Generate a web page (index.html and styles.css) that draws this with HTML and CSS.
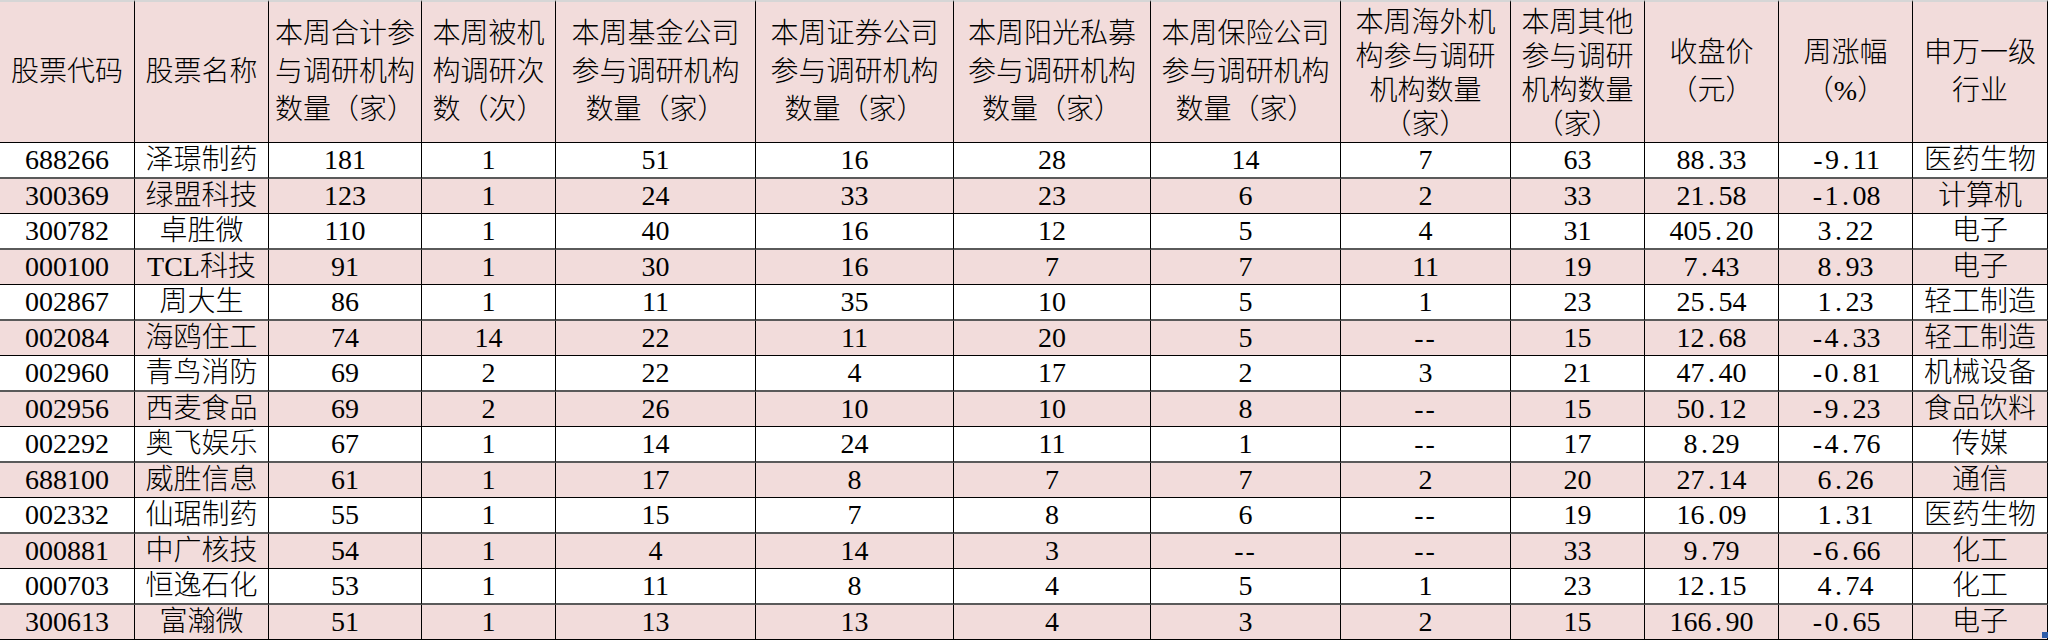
FILE: index.html
```html
<!DOCTYPE html>
<html lang="zh-CN">
<head>
<meta charset="utf-8">
<title>本周机构调研统计</title>
<link rel="stylesheet" href="styles.css">
</head>
<body>
<div class="sheet">
<table class="grid">
  <colgroup>
    <col class="c135"><col class="c134"><col class="c153"><col class="c134"><col class="c200"><col class="c198"><col class="c197"><col class="c190"><col class="c170"><col class="c134"><col class="c134"><col class="c134"><col class="c135">
  </colgroup>
  <thead>
    <tr>
      <th>股票代码</th>
      <th>股票名称</th>
      <th>本周合计参<br>与调研机构<br>数量（家）</th>
      <th>本周被机<br>构调研次<br>数（次）</th>
      <th>本周基金公司<br>参与调研机构<br>数量（家）</th>
      <th>本周证券公司<br>参与调研机构<br>数量（家）</th>
      <th>本周阳光私募<br>参与调研机构<br>数量（家）</th>
      <th>本周保险公司<br>参与调研机构<br>数量（家）</th>
      <th class="l4">本周海外机<br>构参与调研<br>机构数量<br>（家）</th>
      <th class="l4">本周其他<br>参与调研<br>机构数量<br>（家）</th>
      <th>收盘价<br>（元）</th>
      <th>周涨幅<br>（%）</th>
      <th>申万一级<br>行业</th>
    </tr>
  </thead>
  <tbody>
    <tr class="w"><td>688266</td><td>泽璟制药</td><td>181</td><td>1</td><td>51</td><td>16</td><td>28</td><td>14</td><td>7</td><td>63</td><td>88<span class="hw">.</span>33</td><td><span class="hw">-</span>9<span class="hw">.</span>11</td><td>医药生物</td></tr>
    <tr class="p"><td>300369</td><td>绿盟科技</td><td>123</td><td>1</td><td>24</td><td>33</td><td>23</td><td>6</td><td>2</td><td>33</td><td>21<span class="hw">.</span>58</td><td><span class="hw">-</span>1<span class="hw">.</span>08</td><td>计算机</td></tr>
    <tr class="w"><td>300782</td><td>卓胜微</td><td>110</td><td>1</td><td>40</td><td>16</td><td>12</td><td>5</td><td>4</td><td>31</td><td>405<span class="hw">.</span>20</td><td>3<span class="hw">.</span>22</td><td>电子</td></tr>
    <tr class="p"><td>000100</td><td>TCL科技</td><td>91</td><td>1</td><td>30</td><td>16</td><td>7</td><td>7</td><td>11</td><td>19</td><td>7<span class="hw">.</span>43</td><td>8<span class="hw">.</span>93</td><td>电子</td></tr>
    <tr class="w"><td>002867</td><td>周大生</td><td>86</td><td>1</td><td>11</td><td>35</td><td>10</td><td>5</td><td>1</td><td>23</td><td>25<span class="hw">.</span>54</td><td>1<span class="hw">.</span>23</td><td>轻工制造</td></tr>
    <tr class="p"><td>002084</td><td>海鸥住工</td><td>74</td><td>14</td><td>22</td><td>11</td><td>20</td><td>5</td><td class="na">--</td><td>15</td><td>12<span class="hw">.</span>68</td><td><span class="hw">-</span>4<span class="hw">.</span>33</td><td>轻工制造</td></tr>
    <tr class="w"><td>002960</td><td>青鸟消防</td><td>69</td><td>2</td><td>22</td><td>4</td><td>17</td><td>2</td><td>3</td><td>21</td><td>47<span class="hw">.</span>40</td><td><span class="hw">-</span>0<span class="hw">.</span>81</td><td>机械设备</td></tr>
    <tr class="p"><td>002956</td><td>西麦食品</td><td>69</td><td>2</td><td>26</td><td>10</td><td>10</td><td>8</td><td class="na">--</td><td>15</td><td>50<span class="hw">.</span>12</td><td><span class="hw">-</span>9<span class="hw">.</span>23</td><td>食品饮料</td></tr>
    <tr class="w"><td>002292</td><td>奥飞娱乐</td><td>67</td><td>1</td><td>14</td><td>24</td><td>11</td><td>1</td><td class="na">--</td><td>17</td><td>8<span class="hw">.</span>29</td><td><span class="hw">-</span>4<span class="hw">.</span>76</td><td>传媒</td></tr>
    <tr class="p"><td>688100</td><td>威胜信息</td><td>61</td><td>1</td><td>17</td><td>8</td><td>7</td><td>7</td><td>2</td><td>20</td><td>27<span class="hw">.</span>14</td><td>6<span class="hw">.</span>26</td><td>通信</td></tr>
    <tr class="w"><td>002332</td><td>仙琚制药</td><td>55</td><td>1</td><td>15</td><td>7</td><td>8</td><td>6</td><td class="na">--</td><td>19</td><td>16<span class="hw">.</span>09</td><td>1<span class="hw">.</span>31</td><td>医药生物</td></tr>
    <tr class="p"><td>000881</td><td>中广核技</td><td>54</td><td>1</td><td>4</td><td>14</td><td>3</td><td class="na">--</td><td class="na">--</td><td>33</td><td>9<span class="hw">.</span>79</td><td><span class="hw">-</span>6<span class="hw">.</span>66</td><td>化工</td></tr>
    <tr class="w"><td>000703</td><td>恒逸石化</td><td>53</td><td>1</td><td>11</td><td>8</td><td>4</td><td>5</td><td>1</td><td>23</td><td>12<span class="hw">.</span>15</td><td>4<span class="hw">.</span>74</td><td>化工</td></tr>
    <tr class="p"><td>300613</td><td>富瀚微</td><td>51</td><td>1</td><td>13</td><td>13</td><td>4</td><td>3</td><td>2</td><td>15</td><td>166<span class="hw">.</span>90</td><td><span class="hw">-</span>0<span class="hw">.</span>65</td><td>电子</td></tr>
  </tbody>
</table>
<span class="handle"></span>
</div>
</body>
</html>
```

FILE: styles.css
```css
html, body {
  margin: 0;
  padding: 0;
  background: #ffffff;
}

.sheet {
  position: relative;
  width: 2048px;
  height: 640px;
  overflow: hidden;
}

.grid {
  border-collapse: separate;
  border-spacing: 0;
  table-layout: fixed;
  width: 2048px;
  font-family: "Liberation Serif", "Noto Sans CJK SC", serif;
  font-size: 28px;
  color: #000000;
}

.c135 { width: 135px; }
.c134 { width: 134px; }
.c153 { width: 153px; }
.c200 { width: 200px; }
.c198 { width: 198px; }
.c197 { width: 197px; }
.c190 { width: 190px; }
.c170 { width: 170px; }

.grid th,
.grid td {
  padding: 0;
  text-align: center;
  vertical-align: middle;
  border-right: 1px solid #000000;
  white-space: nowrap;
  overflow: hidden;
  font-weight: 300;
}

.grid thead tr {
  height: 143px;
}

.grid th {
  background: #f2dcdb;
  line-height: 38px;
  border-top: 2px solid #d6d6d6;
  border-bottom: 1px solid #000000;
}

.grid th.l4 {
  line-height: 34px;
  padding-top: 4px;
}

.grid td {
  line-height: 30px;
}

.grid tr.w {
  height: 36px;
}

.grid tr.w td {
  background: #ffffff;
  border-bottom: 2px solid #5a5a5a;
}

.grid tr.p {
  height: 35px;
}

.grid tr.p td {
  background: #f2dcdb;
  border-bottom: 1px solid #000000;
}

.hw {
  display: inline-block;
  width: 0.5em;
  text-align: center;
}

.na {
  letter-spacing: 2px;
}

.handle {
  position: absolute;
  right: 0;
  bottom: 2px;
  width: 6px;
  height: 6px;
  background: #2e5ca8;
}
```
